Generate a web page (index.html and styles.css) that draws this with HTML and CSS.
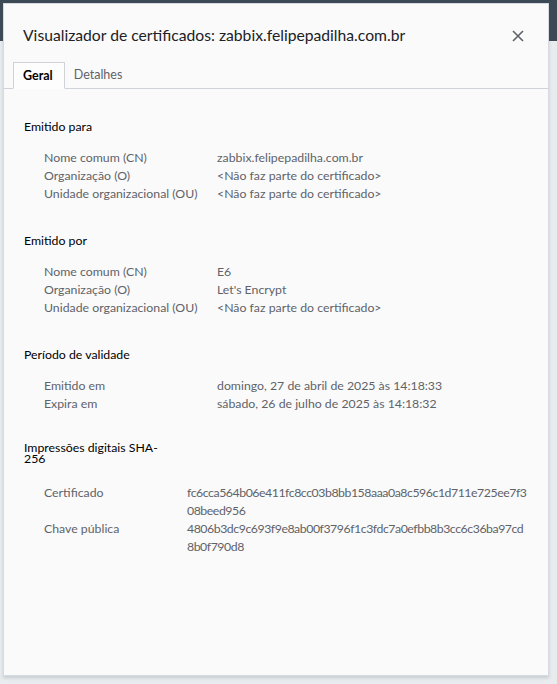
FILE: index.html
```html
<!DOCTYPE html>
<html lang="pt-BR">
<head>
<meta charset="utf-8">
<link rel="stylesheet" href="styles.css">
</head>
<body>
<div class="dialog">
  <div class="header">
    <h1 class="title">Visualizador de certificados: zabbix.felipepadilha.com.br</h1>
    <svg class="close" width="12" height="12" viewBox="0 0 12 12"><path d="M1 1L11 11M11 1L1 11" stroke="#5f6368" stroke-width="1.6" fill="none"/></svg>
  </div>
  <div class="tabs">
    <div class="tab active">Geral</div>
    <div class="tab">Detalhes</div>
    <div class="tab-fill"></div>
  </div>
  <div class="content">
    <section class="sec">
      <h2 class="sec-title">Emitido para</h2>
      <div class="rows">
        <div class="lbl">Nome comum (CN)</div><div class="val">zabbix.felipepadilha.com.br</div>
        <div class="lbl">Organização (O)</div><div class="val">&lt;Não faz parte do certificado&gt;</div>
        <div class="lbl">Unidade organizacional (OU)</div><div class="val">&lt;Não faz parte do certificado&gt;</div>
      </div>
    </section>
    <section class="sec">
      <h2 class="sec-title">Emitido por</h2>
      <div class="rows">
        <div class="lbl">Nome comum (CN)</div><div class="val">E6</div>
        <div class="lbl">Organização (O)</div><div class="val">Let's Encrypt</div>
        <div class="lbl">Unidade organizacional (OU)</div><div class="val">&lt;Não faz parte do certificado&gt;</div>
      </div>
    </section>
    <section class="sec">
      <h2 class="sec-title">Período de validade</h2>
      <div class="rows">
        <div class="lbl">Emitido em</div><div class="val">domingo, 27 de abril de 2025 às 14:18:33</div>
        <div class="lbl">Expira em</div><div class="val">sábado, 26 de julho de 2025 às 14:18:32</div>
      </div>
    </section>
    <section class="sec">
      <h2 class="sec-title narrow">Impressões digitais SHA-256</h2>
      <div class="rows hash">
        <div class="lbl">Certificado</div><div class="val">fc6cca564b06e411fc8cc03b8bb158aaa0a8c596c1d711e725ee7f3<br>08beed956</div>
        <div class="lbl">Chave pública</div><div class="val">4806b3dc9c693f9e8ab00f3796f1c3fdc7a0efbb8b3cc6c36ba97cd<br>8b0f790d8</div>
      </div>
    </section>
  </div>
</div>
</body>
</html>
```

FILE: styles.css
```css
html, body {
  margin: 0;
  padding: 0;
}
body {
  width: 557px;
  height: 684px;
  overflow: hidden;
  background: linear-gradient(#3d4a55 0, #3d4a55 41px, #e8ecef 41px, #e8ecef 100%);
  font-family: "Segoe UI", Lato, "Open Sans", sans-serif;
}
.dialog {
  margin: 3px 0 0 3px;
  width: 546px;
  height: 673px;
  box-sizing: border-box;
  background: #fafafb;
  border: 1px solid #d6dbe1;
  box-shadow: 0 2px 3px rgba(90, 100, 115, 0.22);
  display: flex;
  flex-direction: column;
}
.header {
  display: flex;
  align-items: center;
  justify-content: space-between;
  height: 58px;
  padding: 0 24px 0 19px;
  box-sizing: border-box;
}
.title {
  margin: 0;
  font-size: 15.7px;
  font-weight: 400;
  color: #202124;
  padding-top: 4px;
}
.close {
  margin-top: 6px;
}
.tabs {
  display: flex;
  align-items: flex-end;
  height: 27px;
}
.tab {
  font-size: 12.5px;
  color: #5f6368;
  padding: 0 9px;
  height: 26px;
  line-height: 25px;
  border-bottom: 1px solid #cfd3d8;
}
.tab.active {
  color: #000;
  font-weight: 700;
  background: #fdfdfd;
  border: 1px solid #cfd3d8;
  border-bottom: 1px solid transparent;
  height: 25px;
  padding: 0 11px 0 9px;
}
.tabs::before {
  content: "";
  width: 9px;
  height: 0;
  border-bottom: 1px solid #cfd3d8;
}
.tab-fill {
  flex: 1;
  border-bottom: 1px solid #cfd3d8;
}
.content {
  padding: 29px 10px 0 20px;
}
.sec {
  margin-bottom: 29px;
}
.sec-title {
  margin: 0;
  font-size: 12.3px;
  font-weight: 400;
  color: #000;
  line-height: 18px;
}
.sec-title.narrow {
  width: 140px;
  line-height: 11px;
}
.rows {
  display: grid;
  grid-template-columns: 173px auto;
  margin: 13px 0 0 20px;
  font-size: 12.3px;
  line-height: 18px;
  color: #5f6368;
}
.rows.hash {
  grid-template-columns: 143px auto;
  margin-top: 20px;
}
.hash .val {
  white-space: nowrap;
  letter-spacing: -0.45px;
}
```
